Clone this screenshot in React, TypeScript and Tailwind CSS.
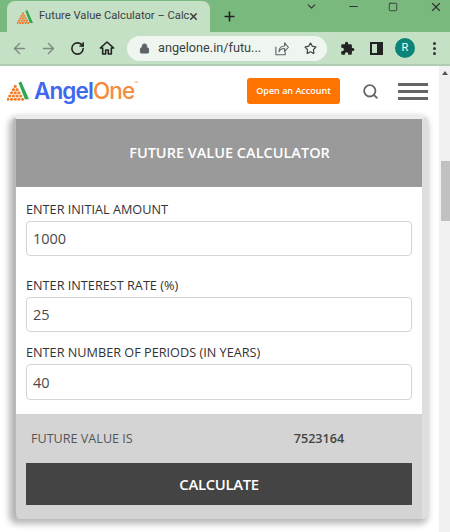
import { ArrowLeft, ArrowRight, RotateCw, Lock, Star, Search, X, Plus, Minus, ChevronDown, Square } from "lucide-react";

const openSans = "font-['Open_Sans',sans-serif]";

const TabLogo = ({ size }: { size: number }) => (
  <svg width={size} height={size} viewBox="0 0 24 24">
    <path d="M12.5 3 L15.5 1.5 L24 21 L19.5 21 Z" fill="#2fa84f" />
    {[
      [9, 7],
      [7, 10.5],
      [11, 10.5],
      [5, 14],
      [9, 14],
      [13, 14],
      [3, 17.5],
      [7, 17.5],
      [11, 17.5],
      [15, 17.5],
      [1, 21],
      [5, 21],
      [9, 21],
      [13, 21],
      [17, 21],
    ].map(([x, y]) => (
      <circle key={`${x}-${y}`} cx={x} cy={y} r={1.7} fill="#f47b2a" />
    ))}
  </svg>
);

const Field = ({ label, value, className, inputClass }: { label: string; value: string; className: string; inputClass: string }) => (
  <div className={className}>
    <div className="text-[12.7px] leading-[16px] whitespace-nowrap text-[#333]">{label}</div>
    <div className={`mt-[4px] rounded-[4px] border border-[#d5d5d5] bg-white pl-[6px] text-[14.5px] font-medium text-[#4a4a4a] ${inputClass}`}>
      {value}
    </div>
  </div>
);

export default function App() {
  return (
    <div className={`relative h-[532px] w-[450px] overflow-hidden bg-white ${openSans}`}>
      {/* title bar */}
      <div className="flex h-[32px] bg-[#7ab97e]">
        <div className="mt-[1px] ml-[7px] flex h-[31px] w-[203px] items-center rounded-t-[8px] bg-[#c4e1c6] pl-[10px]">
          <TabLogo size={16} />
          <span className="ml-[6px] w-[146px] font-['Roboto',sans-serif] text-[11.2px] whitespace-nowrap text-[#3c4043]">
            Future Value Calculator – Calc
          </span>
          <X size={11} strokeWidth={3} className="ml-[3px] text-[#333]" />
        </div>
        <Plus size={15} strokeWidth={2.5} className="mt-[9px] ml-[12px] text-[#222]" />
        <div className="ml-auto flex items-start text-[#333]">
          <ChevronDown size={13} className="mr-[29px]" />
          <Minus size={13} className="mr-[28px]" />
          <Square size={10} className="mt-[2px] mr-[31px]" />
          <X size={14} className="mr-[7px]" />
        </div>
      </div>

      {/* toolbar */}
      <div className="flex h-[34px] items-center border-b-[2px] border-[#b1cdb3] bg-[#c4e1c6]">
        <ArrowLeft size={17} className="ml-[11px] text-[#7d8a80]" />
        <ArrowRight size={17} className="ml-[12px] text-[#7d8a80]" />
        <RotateCw size={15} strokeWidth={2.5} className="ml-[13px] text-[#222]" />
        <svg width="16" height="16" viewBox="0 0 24 24" fill="none" stroke="#222" strokeWidth="2.4" strokeLinejoin="round" className="ml-[14px]">
          <path d="M2 12 L12 3 L22 12 H18.5 V21 H14 V15 H10 V21 H5.5 V12 Z" />
        </svg>
        <div className="ml-[12px] flex h-[25px] w-[200px] items-center rounded-full bg-[#eef6ef] pr-[10px] pl-[12px]">
          <Lock size={11} fill="#5f6368" className="text-[#5f6368]" />
          <span className="ml-[8px] font-['Roboto',sans-serif] text-[12.7px] whitespace-nowrap text-[#3c4043]">angelone.in/futu...</span>
          <svg width="15" height="15" viewBox="0 0 24 24" fill="none" stroke="#5f6368" strokeWidth="1.8" strokeLinejoin="round" className="ml-auto">
            <path d="M3 9v13h15v-4" />
            <path d="M8 17c0-6 4-9 9-9V3l6 7-6 7v-5c-4 0-7 1-9 5z" />
          </svg>
          <Star size={13} strokeWidth={2.2} className="ml-[15px] text-[#444]" />
        </div>
        {/* puzzle piece */}
        <svg width="15" height="15" viewBox="0 0 24 24" className="ml-[13px]">
          <path
            d="M20.5 11H19V7a2 2 0 0 0-2-2h-4V3.5a2.5 2.5 0 0 0-5 0V5H4a2 2 0 0 0-2 2v3.8h1.5a2.7 2.7 0 0 1 0 5.4H2V20a2 2 0 0 0 2 2h3.8v-1.5a2.7 2.7 0 0 1 5.4 0V22H17a2 2 0 0 0 2-2v-4h1.5a2.5 2.5 0 0 0 0-5z"
            fill="#222"
          />
        </svg>
        <div className="ml-[15px] flex h-[13px] w-[13px] justify-end border-2 border-[#222]">
          <div className="h-full w-[4px] bg-[#222]" />
        </div>
        <div className="ml-[12px] flex h-[20px] w-[20px] items-center justify-center rounded-full bg-[#0b8577] font-['Roboto',sans-serif] text-[11px] text-white">
          R
        </div>
        <div className="ml-[18px] flex flex-col gap-[2px]">
          <span className="h-[3px] w-[3px] rounded-full bg-[#333]" />
          <span className="h-[3px] w-[3px] rounded-full bg-[#333]" />
          <span className="h-[3px] w-[3px] rounded-full bg-[#333]" />
        </div>
      </div>

      {/* page */}
      <div className="flex h-[466px]">
        <div className="w-[439px]">
          <div className="flex h-[50px] items-center">
            <div className="ml-[7px]">
              <TabLogo size={22} />
            </div>
            <span className="ml-[5px] font-['Inter',sans-serif] text-[22.5px] leading-none font-semibold tracking-[-0.9px] text-[#3e68f0]">
              Angel
            </span>
            <span className="font-['Inter',sans-serif] text-[22.5px] leading-none font-medium tracking-[-0.9px] text-[#f58b3a]">
              One
            </span>
            <span className="mb-[16px] text-[5px] leading-none text-[#f58b3a]">™</span>
            <div className="mr-[11px] ml-auto flex items-center">
              <div className="flex h-[26px] w-[93px] items-center justify-center rounded-[3px] bg-[#ff7300] text-[9px] font-semibold text-white">
                Open an Account
              </div>
              <Search size={17} strokeWidth={2.6} className="ml-[22px] text-[#666]" />
              <div className="ml-[19px] flex w-[30px] flex-col gap-[4px]">
                <span className="h-[3px] bg-[#666]" />
                <span className="h-[3px] bg-[#666]" />
                <span className="h-[3px] bg-[#666]" />
              </div>
            </div>
          </div>

          {/* card */}
          <div className="ml-[13px] h-[403px] w-[415px] rounded-[6px] border-t-[3px] border-r-[6px] border-l-[3px] border-t-[#ececec] border-r-[#dedede] border-l-[#b9b9b9] bg-[#d4d4d4] shadow-[-2px_3px_6px_2px_rgba(0,0,0,0.28)]">
            <div className="flex h-[68px] items-center justify-center bg-[#9a9a9a] pl-[21px] text-[14.5px] font-semibold text-white">
              FUTURE VALUE CALCULATOR
            </div>
            <div className="h-[227px] bg-white px-[10px] pt-[14px]">
              <Field label="ENTER INITIAL AMOUNT" value="1000" className="" inputClass="h-[35px] leading-[33px]" />
              <Field label="ENTER INTEREST RATE (%)" value="25" className="mt-[21px]" inputClass="h-[35px] leading-[33px]" />
              <Field label="ENTER NUMBER OF PERIODS (IN YEARS)" value="40" className="mt-[12px]" inputClass="h-[36px] leading-[36px]" />
            </div>
            <div className="flex h-[49px] items-center pt-[2px] text-[12.6px] text-[#555]">
              <span className="ml-[15px]">FUTURE VALUE IS</span>
              <span className="ml-[161px] font-semibold text-[#444]">7523164</span>
            </div>
            <div className="mx-[10px] flex h-[42px] items-center justify-center bg-[#444] text-[14.8px] font-semibold tracking-[-0.3px] text-white">
              CALCULATE
            </div>
          </div>
        </div>

        {/* scrollbar */}
        <div className="relative w-[11px] bg-[#f1f1f1]">
          <div className="mx-auto mt-[5px] h-0 w-0 border-x-[3px] border-b-[4px] border-x-transparent border-b-[#555]" />
          <div className="mt-[86px] ml-[2px] h-[60px] bg-[#c1c1c1]" />
        </div>
      </div>
    </div>
  );
}
